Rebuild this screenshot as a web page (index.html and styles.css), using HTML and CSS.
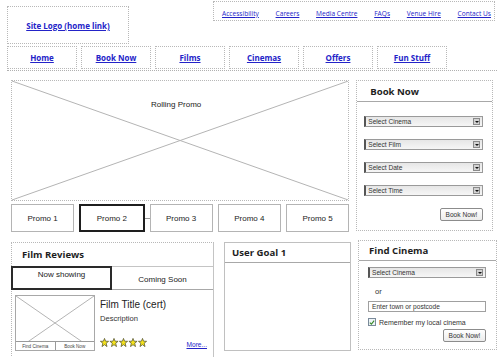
FILE: index.html
```html
<!DOCTYPE html>
<html lang="en">

<head>
    <meta charset="UTF-8">
    <meta name="viewport" content="width=device-width, initial-scale=1.0">
    <title>Cinema Home - Wireframe</title>
    <link rel="stylesheet" href="styles.css">
</head>

<body>
    <div class="page">
        <header class="top">
            <div class="logo"><a href="#">Site Logo (home link)</a></div>
            <ul class="util">
                <li><a href="#">Accessibility</a></li>
                <li><a href="#">Careers</a></li>
                <li><a href="#">Media Centre</a></li>
                <li><a href="#">FAQs</a></li>
                <li><a href="#">Venue Hire</a></li>
                <li><a href="#">Contact Us</a></li>
            </ul>
        </header>

        <nav class="nav">
            <a href="#">Home</a>
            <a href="#">Book Now</a>
            <a href="#">Films</a>
            <a href="#">Cinemas</a>
            <a href="#">Offers</a>
            <a href="#">Fun Stuff</a>
        </nav>

        <div class="row row-top">
            <div class="promo-col">
                <div class="rolling">
                    <svg class="cross" viewBox="0 0 100 100" preserveAspectRatio="none">
                        <line x1="0" y1="0" x2="100" y2="100" />
                        <line x1="0" y1="100" x2="100" y2="0" />
                    </svg>
                    <span class="rolling-label">Rolling Promo</span>
                </div>
                <div class="promos">
                    <div class="promo">Promo 1</div>
                    <div class="promo active">Promo 2</div>
                    <div class="promo">Promo 3</div>
                    <div class="promo">Promo 4</div>
                    <div class="promo">Promo 5</div>
                </div>
            </div>

            <aside class="panel book">
                <div class="panel-head">Book Now</div>
                <div class="book-body">
                    <div class="select">Select Cinema<span class="arrow"></span></div>
                    <div class="select">Select Film<span class="arrow"></span></div>
                    <div class="select">Select Date<span class="arrow"></span></div>
                    <div class="select">Select Time<span class="arrow"></span></div>
                    <button class="btn">Book Now!</button>
                </div>
            </aside>
        </div>

        <div class="row row-bottom">
            <section class="panel reviews">
                <div class="panel-head">Film Reviews</div>
                <div class="tabs">
                    <div class="tab current">Now showing</div>
                    <div class="tab">Coming Soon</div>
                </div>
                <div class="film">
                    <div class="poster">
                        <svg class="cross" viewBox="0 0 100 100" preserveAspectRatio="none">
                            <line x1="0" y1="0" x2="100" y2="100" />
                            <line x1="0" y1="100" x2="100" y2="0" />
                        </svg>
                        <div class="poster-btns">
                            <span>Find Cinema</span>
                            <span>Book Now</span>
                        </div>
                    </div>
                    <div class="film-info">
                        <div class="film-title">Film Title (cert)</div>
                        <div class="film-desc">Description</div>
                        <div class="film-foot">
                            <svg class="stars" width="47" height="9" viewBox="0 0 47 9">
                                <polygon points="4.5,0.4 5.6,3.2 8.6,3.3 6.2,5.2 7,8.6 4.5,6.7 2,8.6 2.8,5.2 0.4,3.3 3.4,3.2" />
                                <polygon transform="translate(9.5 0)" points="4.5,0.4 5.6,3.2 8.6,3.3 6.2,5.2 7,8.6 4.5,6.7 2,8.6 2.8,5.2 0.4,3.3 3.4,3.2" />
                                <polygon transform="translate(19 0)" points="4.5,0.4 5.6,3.2 8.6,3.3 6.2,5.2 7,8.6 4.5,6.7 2,8.6 2.8,5.2 0.4,3.3 3.4,3.2" />
                                <polygon transform="translate(28.5 0)" points="4.5,0.4 5.6,3.2 8.6,3.3 6.2,5.2 7,8.6 4.5,6.7 2,8.6 2.8,5.2 0.4,3.3 3.4,3.2" />
                                <polygon transform="translate(38 0)" points="4.5,0.4 5.6,3.2 8.6,3.3 6.2,5.2 7,8.6 4.5,6.7 2,8.6 2.8,5.2 0.4,3.3 3.4,3.2" />
                            </svg>
                            <a href="#" class="more">More...</a>
                        </div>
                    </div>
                </div>
            </section>

            <section class="panel goal">
                <div class="panel-head">User Goal 1</div>
            </section>

            <aside class="panel find">
                <div class="panel-head">Find Cinema</div>
                <div class="find-body">
                    <div class="select">Select Cinema<span class="arrow"></span></div>
                    <div class="or">or</div>
                    <div class="input">Enter town or postcode</div>
                    <label class="remember">
                        <span class="check">
                            <svg width="7" height="7" viewBox="0 0 7 7">
                                <path d="M1 3.6 L2.8 5.4 L6 1.4" />
                            </svg>
                        </span>
                        Remember my local cinema
                    </label>
                    <button class="btn">Book Now!</button>
                </div>
            </aside>
        </div>
    </div>
</body>

</html>
```

FILE: styles.css
```css
* {
    margin: 0;
    padding: 0;
    box-sizing: border-box;
}

html,
body {
    overflow: hidden;
}

body {
    font-family: 'Liberation Sans', Arial, sans-serif;
    background: #ffffff;
    color: #222222;
    width: 500px;
    height: 357px;
}

a {
    color: #2323c8;
}

/* header */

.top {
    display: flex;
    justify-content: space-between;
    align-items: flex-start;
    height: 46px;
    padding: 1px 5px 0 7px;
}

.logo {
    margin-top: 5px;
    width: 122px;
    height: 38px;
    border: 1px dotted #b8b8b8;
    display: flex;
    justify-content: center;
    align-items: center;
}

.logo a,
.nav a {
    font-family: 'Open Sans', 'DejaVu Sans', sans-serif;
    font-weight: 700;
    font-size: 8px;
}

.util {
    list-style: none;
    width: 282px;
    height: 20px;
    border: 1px dotted #b8b8b8;
    display: flex;
    justify-content: space-between;
    align-items: center;
    padding: 0 3px 0 8px;
}

.util a {
    font-family: 'Open Sans', 'DejaVu Sans', sans-serif;
    font-size: 6.6px;
}

.nav {
    display: flex;
    gap: 4px;
    margin: 0 3px 0 7px;
    padding-bottom: 1px;
    border-bottom: 1px dotted #b0b0b0;
}

.nav a {
    width: 70px;
    height: 23px;
    border: 1px dotted #b8b8b8;
    display: flex;
    justify-content: center;
    align-items: center;
}

/* rows */

.row {
    display: flex;
    align-items: flex-start;
}

.row-top {
    margin-top: 9px;
    padding: 0 7px 0 11px;
    gap: 7px;
}

.row-bottom {
    margin-top: 10px;
    padding-left: 11px;
}

.panel {
    border: 1px dotted #b8b8b8;
}

.panel-head {
    font-family: 'Open Sans', 'DejaVu Sans', sans-serif;
    font-weight: 700;
    font-size: 9.6px;
    color: #1e1e1e;
    display: flex;
    align-items: center;
    border-bottom: 1px solid #a8a8a8;
}

/* promo */

.promo-col {
    width: 339px;
}

.rolling {
    position: relative;
    height: 121px;
    border: 1px dotted #b8b8b8;
    display: flex;
    justify-content: center;
    padding: 19px 8px 0 0;
    font-size: 8px;
}

.cross {
    position: absolute;
    inset: 0;
    width: 100%;
    height: 100%;
}

.cross line {
    stroke: #b4b4b4;
    stroke-width: 1;
    vector-effect: non-scaling-stroke;
}

.rolling-label {
    position: relative;
}

.promos {
    display: flex;
    gap: 5px;
    margin-top: 3px;
}

.promo {
    position: relative;
    flex: 1;
    height: 28px;
    border: 1px solid #b4b4b4;
    display: flex;
    justify-content: center;
    align-items: center;
    font-size: 8px;
}

.promo.active {
    border: 2px solid #1e1e1e;
}

.promo.active::after {
    content: '';
    position: absolute;
    right: -7px;
    top: 12px;
    width: 5px;
    border-top: 1px solid #9a9a9a;
}

/* book now */

.book {
    width: 137px;
    height: 151px;
}

.book .panel-head {
    height: 21px;
    padding-left: 13px;
}

.book-body {
    display: flex;
    flex-direction: column;
    align-items: flex-end;
    gap: 12px;
    padding: 14px 9px 0 7px;
}

.select {
    position: relative;
    width: 100%;
    height: 11px;
    border: 1px solid #9a9a9a;
    border-left: 2px solid #555555;
    background: linear-gradient(#e6e6e6, #f6f6f6);
    font-size: 6.6px;
    line-height: 9px;
    padding-left: 2px;
    color: #333333;
}

.arrow {
    position: absolute;
    right: 2px;
    top: 1px;
    width: 7px;
    height: 7px;
    background: #d2d2d2;
    border: 1px solid #8a8a8a;
}

.arrow::after {
    content: '';
    position: absolute;
    left: 1px;
    top: 2px;
    border-left: 2px solid transparent;
    border-right: 2px solid transparent;
    border-top: 2px solid #111111;
}

.btn {
    font-family: 'Liberation Sans', Arial, sans-serif;
    font-size: 6.6px;
    color: #333333;
    background: linear-gradient(#ffffff, #ececec);
    border: 1px solid #8c8c8c;
    border-radius: 2px;
    height: 13px;
    padding: 0 3px;
}

.book .btn {
    width: 43px;
    margin-top: 0;
}

/* film reviews */

.reviews {
    width: 203px;
    height: 130px;
    border-right-style: solid;
    border-right-color: #c4c4c4;
}

.reviews .panel-head {
    height: 23px;
    padding-left: 10px;
    border-bottom: none;
}

.tabs {
    display: flex;
    height: 24px;
    border-bottom: 1px solid #a8a8a8;
    border-top: 1px solid #c4c4c4;
    font-size: 8px;
}

.tab {
    flex: 1;
    display: flex;
    justify-content: center;
    align-items: center;
    padding-top: 2px;
}

.tab.current {
    flex: 0 0 101px;
    margin: -1px 0 -1px -1px;
    border: 2px solid #2a2a2a;
    align-items: flex-start;
    padding-top: 2px;
}

.film {
    display: flex;
    gap: 5px;
    padding: 5px 0 0 3px;
}

.poster {
    position: relative;
    width: 80px;
    height: 56px;
    border: 1px solid #a8a8a8;
}

.poster-btns {
    position: absolute;
    left: 0;
    right: 0;
    bottom: 0;
    display: flex;
    height: 9px;
    border-top: 1px solid #9a9a9a;
    background: #ffffff;
    font-size: 4.6px;
    color: #444444;
}

.poster-btns span {
    flex: 1;
    display: flex;
    justify-content: center;
    align-items: center;
}

.poster-btns span + span {
    border-left: 1px solid #9a9a9a;
}

.film-info {
    flex: 1;
    display: flex;
    flex-direction: column;
    padding-top: 4px;
}

.film-title {
    font-size: 10px;
    color: #222222;
}

.film-desc {
    font-size: 7.6px;
    margin-top: 4px;
    color: #333333;
}

.film-foot {
    display: flex;
    justify-content: space-between;
    align-items: flex-end;
    margin-top: 15px;
    padding-right: 6px;
}

.stars polygon {
    fill: #f4e21c;
    stroke: #4a4a2a;
    stroke-width: 0.7;
}

.more {
    font-size: 6.6px;
    margin-bottom: -1px;
}

/* user goal */

.goal {
    width: 127px;
    height: 109px;
    margin-left: 10px;
    border-style: solid;
    border-color: #c0c0c0;
}

.goal .panel-head {
    height: 20px;
    padding-left: 7px;
}

/* find cinema */

.find {
    width: 139px;
    height: 110px;
    margin-left: 7px;
    margin-top: -2px;
}

.find .panel-head {
    height: 20px;
    padding-left: 10px;
}

.find-body {
    display: flex;
    flex-direction: column;
    align-items: flex-start;
    padding: 6px 10px 0 9px;
    font-size: 7px;
}

.or {
    font-size: 7.6px;
    margin: 9px 0 0 7px;
    color: #333333;
}

.input {
    width: 100%;
    height: 11px;
    margin-top: 5px;
    border: 1px solid #a0a0a0;
    font-size: 6.6px;
    line-height: 9px;
    padding-left: 3px;
    color: #333333;
}

.remember {
    display: flex;
    align-items: center;
    gap: 3px;
    margin-top: 6px;
    color: #333333;
}

.check {
    width: 8px;
    height: 8px;
    border: 1px solid #7a8a9a;
    background: #eef4f8;
    display: flex;
    justify-content: center;
    align-items: center;
}

.check path {
    fill: none;
    stroke: #3a8a2a;
    stroke-width: 1.3;
}

.find .btn {
    align-self: flex-end;
    width: 43px;
    height: 13px;
    margin-top: 3px;
}
```
